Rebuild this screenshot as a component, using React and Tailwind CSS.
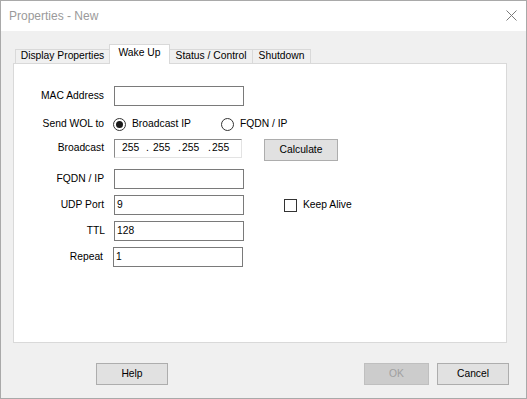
import React from "react";

const font = { fontFamily: '"Liberation Sans", Arial, sans-serif' };

function Label({ children, w = "w-[90px]", gap = "mr-[10px]" }) {
  return (
    <div className={`${w} ${gap} shrink-0 text-right leading-none`}>{children}</div>
  );
}

function TextBox({ value = "", w = "w-[130px]" }) {
  return (
    <div className={`${w} h-[20px] bg-white border border-[#7a7a7a] flex items-center pl-[2px] leading-none`}>
      {value}
    </div>
  );
}

function Radio({ checked }) {
  return (
    <div className="w-[13px] h-[13px] rounded-full border border-[#333] bg-white flex items-center justify-center shrink-0">
      {checked && <div className="w-[7px] h-[7px] rounded-full bg-[#1a1a1a]" />}
    </div>
  );
}

function Btn({ children, w, disabled }) {
  return (
    <div
      className={`${w} h-[22px] flex items-center justify-center border leading-none ${
        disabled
          ? "bg-[#cccccc] border-[#bfbfbf] text-[#a0a0a0]"
          : "bg-[#e1e1e1] border-[#adadad] text-black"
      }`}
    >
      {children}
    </div>
  );
}

export default function App() {
  return (
    <div
      style={font}
      className="w-[527px] h-[399px] bg-[#f0f0f0] border border-[#a9a9a9] flex flex-col text-[10.3px] text-black overflow-hidden"
    >
      {/* Title bar */}
      <div className="h-[30px] bg-white flex items-center justify-between pl-[8px] pr-[9px] shrink-0">
        <span className="text-[12px] text-[#9a9a9a] leading-none">Properties - New</span>
        <svg width="11" height="11" viewBox="0 0 11 11" className="mt-[-1px]">
          <path d="M0.5 0.5 L10.5 10.5 M10.5 0.5 L0.5 10.5" stroke="#7a7a7a" strokeWidth="1" fill="none" />
        </svg>
      </div>

      {/* Tabs */}
      <div className="ml-[14px] mt-[13px] h-[19px] flex items-end shrink-0">
        <div className="w-[94px] h-[14px] border-t border-l border-[#d9d9d9] flex items-center justify-center leading-none">
          Display Properties
        </div>
        <div className="relative z-10 w-[61px] h-[20px] -mb-[1px] bg-white border-t border-l border-r border-[#d9d9d9] flex items-center justify-center pb-[3px] leading-none">
          Wake Up
        </div>
        <div className="w-[83px] h-[14px] border-t border-r border-[#d9d9d9] flex items-center justify-center leading-none">
          Status / Control
        </div>
        <div className="w-[58px] h-[14px] border-t border-r border-[#d9d9d9] flex items-center justify-center leading-none">
          Shutdown
        </div>
      </div>

      {/* Panel */}
      <div className="ml-[12px] w-[494px] h-[280px] bg-white border border-[#d9d9d9] flex flex-col shrink-0">
        {/* MAC Address */}
        <div className="mt-[22px] h-[20px] flex items-center">
          <Label>MAC Address</Label>
          <TextBox />
        </div>

        {/* Send WOL to */}
        <div className="mt-[8px] h-[20px] flex items-center">
          <Label gap="mr-[9px]">Send WOL to</Label>
          <div className="w-[108px] flex items-center">
            <Radio checked />
            <span className="ml-[6px] leading-none">Broadcast IP</span>
          </div>
          <div className="flex items-center">
            <Radio />
            <span className="ml-[6px] leading-none">FQDN / IP</span>
          </div>
        </div>

        {/* Broadcast */}
        <div className="mt-[5px] h-[22px] flex items-start">
          <div className="h-[19px] flex items-center">
            <Label>Broadcast</Label>
          </div>
          <div className="w-[128px] h-[19px] bg-white border-t border-l border-[#8a8a8a] border-r border-b border-r-[#e3e3e3] border-b-[#e3e3e3] flex items-center leading-none">
            <span className="ml-[7px] w-[24px]">255</span>
            <span className="w-[7px]">.</span>
            <span className="w-[25px]">255</span>
            <span className="w-[4px]">.</span>
            <span className="w-[26px]">255</span>
            <span className="w-[4px]">.</span>
            <span>255</span>
          </div>
          <div className="ml-[22px]">
            <Btn w="w-[74px]">Calculate</Btn>
          </div>
        </div>

        {/* FQDN / IP */}
        <div className="mt-[8px] h-[20px] flex items-center">
          <Label>FQDN / IP</Label>
          <TextBox />
        </div>

        {/* UDP Port */}
        <div className="mt-[6px] h-[20px] flex items-center">
          <Label>UDP Port</Label>
          <TextBox value="9" />
          <div className="ml-[40px] w-[13px] h-[13px] border border-[#333] bg-white shrink-0" />
          <span className="ml-[6px] leading-none">Keep Alive</span>
        </div>

        {/* TTL */}
        <div className="mt-[6px] h-[20px] flex items-center">
          <Label w="w-[91px]" gap="mr-[9px]">TTL</Label>
          <TextBox value="128" />
        </div>

        {/* Repeat */}
        <div className="mt-[6px] h-[20px] flex items-center">
          <Label w="w-[89px]">Repeat</Label>
          <TextBox value="1" />
        </div>
      </div>

      {/* Bottom buttons */}
      <div className="mt-[20px] ml-[95px] flex items-center">
        <Btn w="w-[72px]">Help</Btn>
        <div className="ml-[196px]">
          <Btn w="w-[65px]" disabled>OK</Btn>
        </div>
        <div className="ml-[8px]">
          <Btn w="w-[72px]">Cancel</Btn>
        </div>
      </div>
    </div>
  );
}
